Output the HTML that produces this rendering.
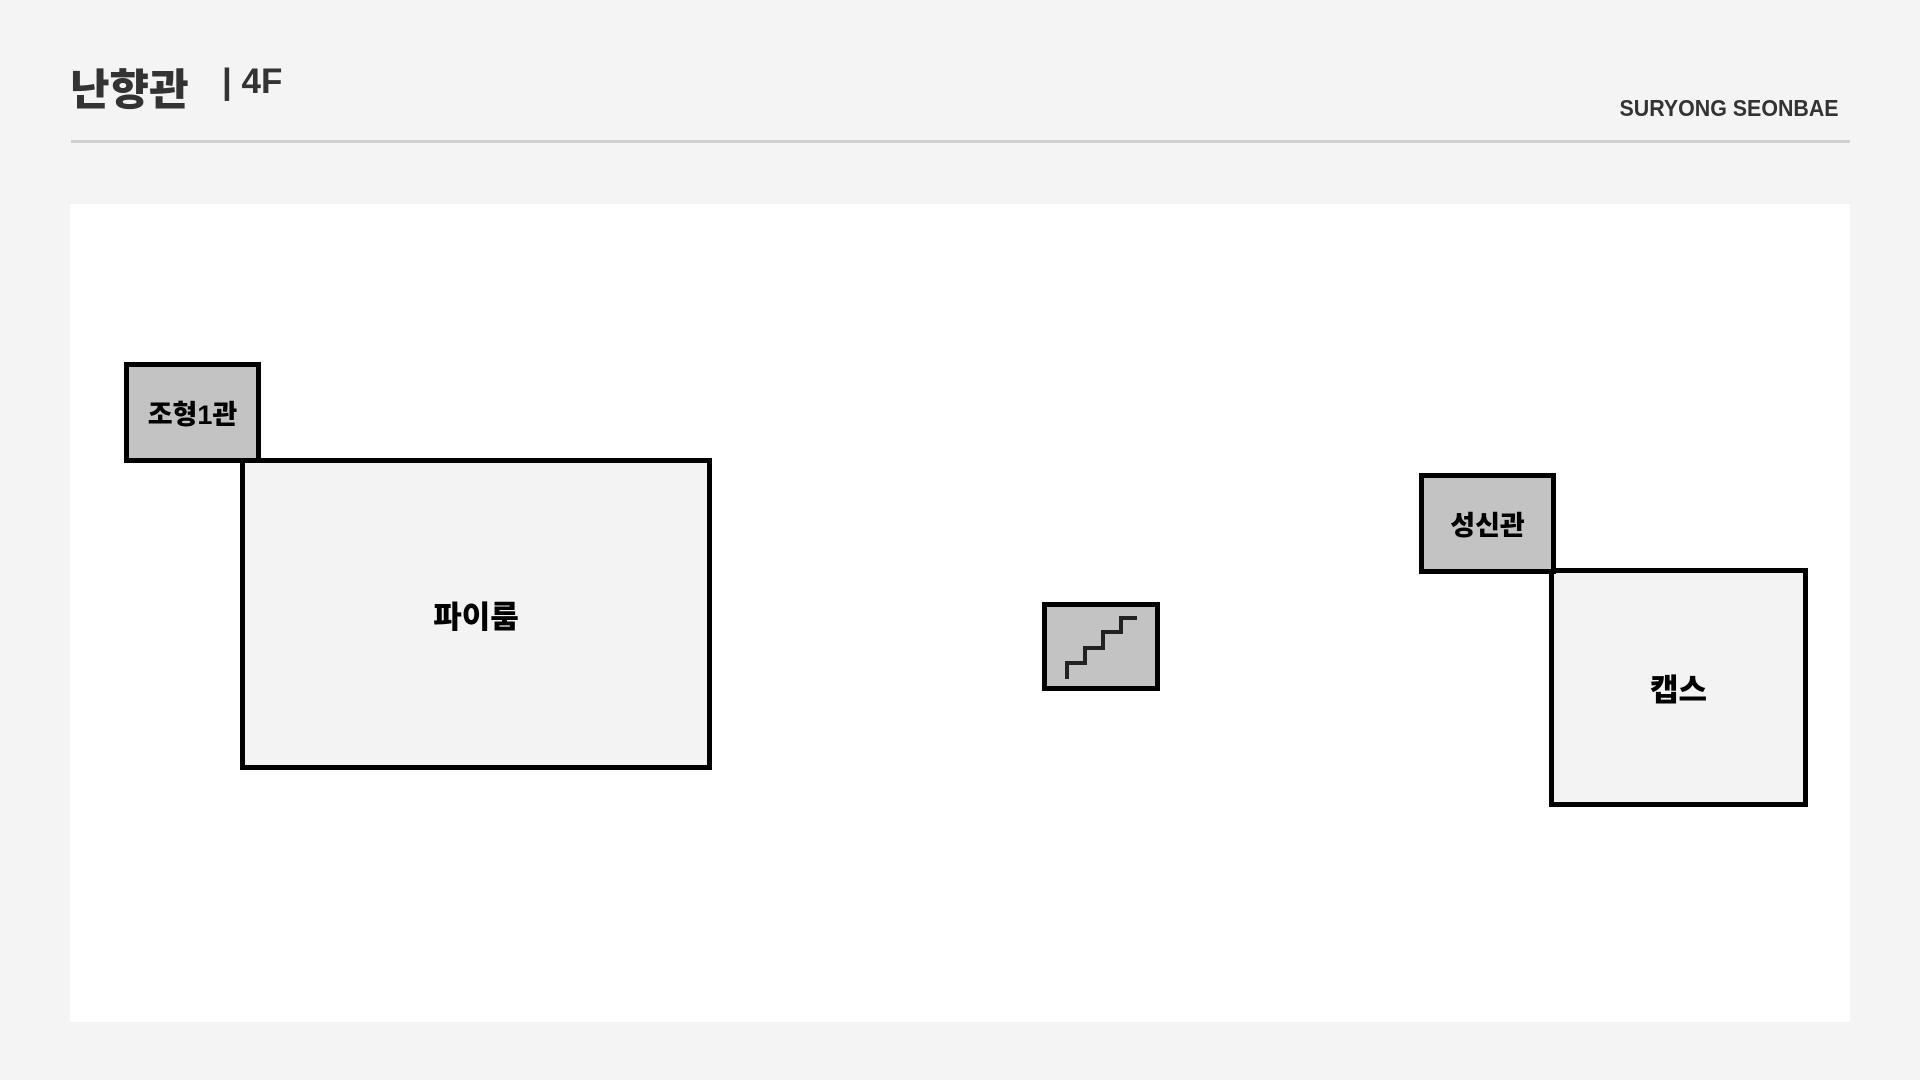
<!DOCTYPE html>
<html><head><meta charset="utf-8"><style>
html,body{margin:0;padding:0}
body{width:1920px;height:1080px;background:#f4f4f4;position:relative;overflow:hidden;font-family:"Liberation Sans","Noto Sans CJK KR",sans-serif;font-weight:900;color:#000}
.a{position:absolute;box-sizing:border-box}
.box{border:5px solid #000;display:flex;align-items:center;justify-content:center}
.g{background:#c3c3c3;font-size:27px}
.l{background:#f3f3f3;font-size:31px}
</style></head><body>
<div class="a" style="left:70px;top:56px;font-size:43px;color:#333;letter-spacing:0px">난향관</div>
<div class="a" style="left:222px;top:62px;font-size:35px;color:#333">| 4F</div>
<div class="a" style="right:81px;top:95px;font-size:23px;color:#333;transform:scaleX(0.93);transform-origin:right center">SURYONG SEONBAE</div>
<div class="a" style="left:71px;top:140px;width:1779px;height:3px;background:#d0d0d0"></div>
<div class="a" style="left:70px;top:204px;width:1780px;height:818px;background:#fff"></div>
<div class="a box l" style="left:240px;top:458px;width:472px;height:312px">파이룸</div>
<div class="a box g" style="left:124px;top:362px;width:137px;height:101px">조형1관</div>
<div class="a box l" style="left:1549px;top:568px;width:259px;height:239px">캡스</div>
<div class="a box g" style="left:1419px;top:473px;width:137px;height:101px">성신관</div>
<div class="a box g" style="left:1042px;top:602px;width:118px;height:89px"></div>
<svg class="a" style="left:0;top:0" width="1920" height="1080"><polyline points="1067,679 1067,663 1085,663 1085,648 1103,648 1103,632 1121,632 1121,618 1137,618" fill="none" stroke="#222" stroke-width="4"/></svg>
</body></html>
